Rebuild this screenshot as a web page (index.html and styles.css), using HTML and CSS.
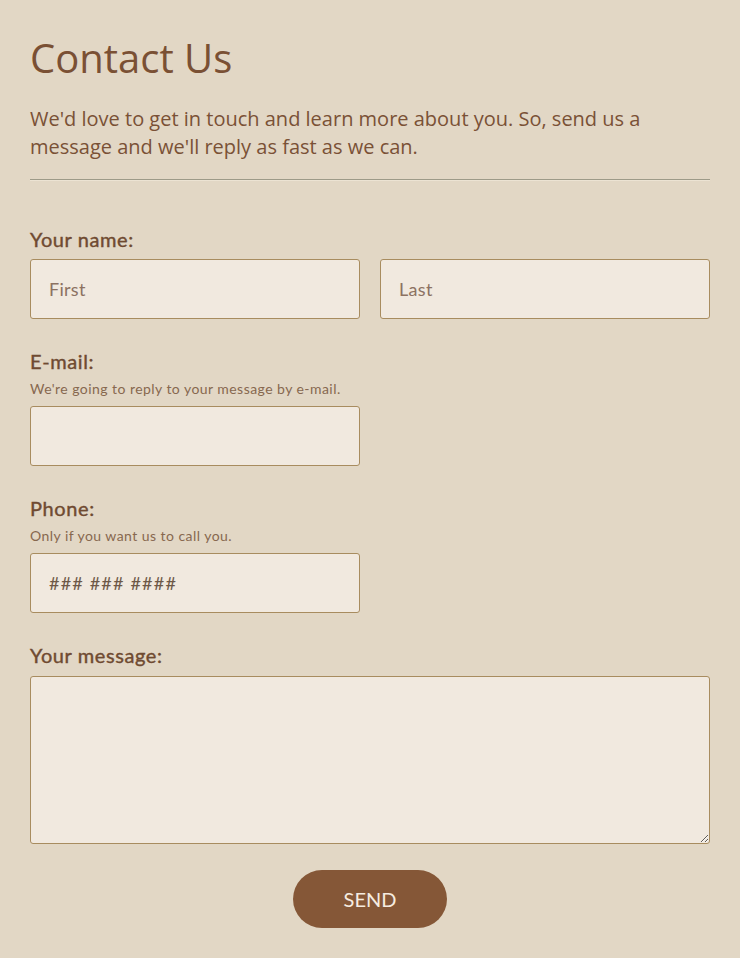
FILE: index.html
```html
<!DOCTYPE html>
<html lang="en">
<head>
<meta charset="utf-8">
<title>Contact Us</title>
<link rel="stylesheet" href="styles.css">
</head>
<body>
<main class="page">
  <h1 class="title">Contact Us</h1>
  <p class="intro">We'd love to get in touch and learn more about you. So, send us a message and we'll reply as fast as we can.</p>
  <hr class="divider">
  <form class="form">
    <div class="group">
      <label class="label">Your name:</label>
      <div class="name-row">
        <input class="field" type="text" placeholder="First">
        <input class="field" type="text" placeholder="Last">
      </div>
    </div>
    <div class="group">
      <label class="label">E-mail:</label>
      <div class="hint">We're going to reply to your message by e-mail.</div>
      <input class="field half" type="email">
    </div>
    <div class="group">
      <label class="label">Phone:</label>
      <div class="hint">Only if you want us to call you.</div>
      <input class="field half phone" type="tel" placeholder="### ### ####">
    </div>
    <div class="group">
      <label class="label msg-label">Your message:</label>
      <textarea class="field message"></textarea>
    </div>
    <div class="actions">
      <button class="send" type="button">SEND</button>
    </div>
  </form>
</main>
</body>
</html>
```

FILE: styles.css
```css
* { box-sizing: border-box; }
html, body { margin: 0; padding: 0; }
body {
  background: #e2d7c5;
  color: #7a5136;
  width: 740px;
  height: 958px;
  overflow: hidden;
}
.page {
  padding: 33px 30px 0 30px;
}
.title {
  margin: 0;
  font-family: "Open Sans", sans-serif;
  font-weight: 400;
  font-size: 40px;
  line-height: 50px;
  color: #7a5034;
}
.intro {
  margin: 22px 0 0 0;
  font-family: "Open Sans", sans-serif;
  font-size: 20px;
  line-height: 28px;
  color: #7a5136;
}
.divider {
  margin: 18px 0 0 0;
  border: 0;
  border-top: 1px solid #9d9a88;
  border-bottom: 1px solid #ece3d3;
  height: 0;
}
.form {
  display: flex;
  flex-direction: column;
  padding-top: 16px;
}
.group {
  display: flex;
  flex-direction: column;
  margin-top: 30px;
}
.label {
  font-family: Lato, sans-serif;
  font-weight: 400;
  font-size: 20px;
  line-height: 24px;
  letter-spacing: 0.6px;
  -webkit-text-stroke: 0.4px #6f4a31;
  color: #6f4a31;
  margin-bottom: 8px;
}
.msg-label {
  margin-bottom: 9px;
}
.hint {
  font-family: Lato, sans-serif;
  font-size: 14px;
  line-height: 18px;
  letter-spacing: 0.45px;
  color: #87684f;
  margin-top: -1px;
  margin-bottom: 8px;
}
.name-row {
  display: grid;
  grid-template-columns: 1fr 1fr;
  gap: 20px;
}
.field {
  height: 60px;
  background: #f1e9df;
  border: 1px solid #a88c5f;
  border-radius: 3px;
  padding: 0 18px;
  font-family: Lato, sans-serif;
  font-size: 18px;
  letter-spacing: 0.3px;
  color: #6f4a31;
  outline: none;
}
.field::placeholder {
  color: #8c7262;
}
.phone {
  letter-spacing: 1.2px;
}
.phone::placeholder {
  color: #6d5847;
}
.half {
  width: 330px;
}
.message {
  height: 168px;
  width: 100%;
  resize: vertical;
  padding: 12px 18px;
}
.actions {
  display: flex;
  justify-content: center;
  margin-top: 26px;
}
.send {
  width: 154px;
  height: 58px;
  border: 0;
  border-radius: 29px;
  background: #855737;
  color: #f6ece0;
  font-family: Lato, sans-serif;
  font-size: 20px;
  cursor: pointer;
}
```
